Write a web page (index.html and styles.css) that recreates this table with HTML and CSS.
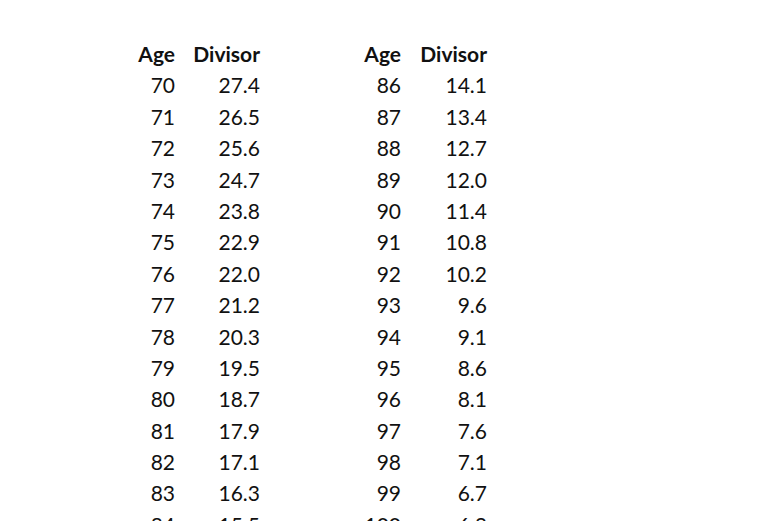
FILE: index.html
```html
<!DOCTYPE html>
<html>
<head>
<meta charset="utf-8">
<link rel="stylesheet" href="styles.css">
</head>
<body>
<div class="sheet">
  <div class="hd">Age</div><div class="hd">Divisor</div><div class="hd">Age</div><div class="hd">Divisor</div>
  <div>70</div><div>27.4</div><div>86</div><div>14.1</div>
  <div>71</div><div>26.5</div><div>87</div><div>13.4</div>
  <div>72</div><div>25.6</div><div>88</div><div>12.7</div>
  <div>73</div><div>24.7</div><div>89</div><div>12.0</div>
  <div>74</div><div>23.8</div><div>90</div><div>11.4</div>
  <div>75</div><div>22.9</div><div>91</div><div>10.8</div>
  <div>76</div><div>22.0</div><div>92</div><div>10.2</div>
  <div>77</div><div>21.2</div><div>93</div><div>9.6</div>
  <div>78</div><div>20.3</div><div>94</div><div>9.1</div>
  <div>79</div><div>19.5</div><div>95</div><div>8.6</div>
  <div>80</div><div>18.7</div><div>96</div><div>8.1</div>
  <div>81</div><div>17.9</div><div>97</div><div>7.6</div>
  <div>82</div><div>17.1</div><div>98</div><div>7.1</div>
  <div>83</div><div>16.3</div><div>99</div><div>6.7</div>
  <div>84</div><div>15.5</div><div>100</div><div>6.3</div>
  <div>85</div><div>14.8</div><div>101</div><div>5.9</div>
</div>
</body>
</html>
```
FILE: styles.css
```css
html, body {
  margin: 0;
  background: #ffffff;
  overflow: hidden;
}
.sheet {
  display: grid;
  grid-template-columns: 175px 85px 141px 86px;
  grid-auto-rows: 31.4px;
  padding-top: 38px;
  font-family: "Lato", "Open Sans", sans-serif;
  font-size: 21px;
  color: #111111;
  text-align: right;
  line-height: 31.4px;
}
.hd {
  font-weight: 700;
}
```
